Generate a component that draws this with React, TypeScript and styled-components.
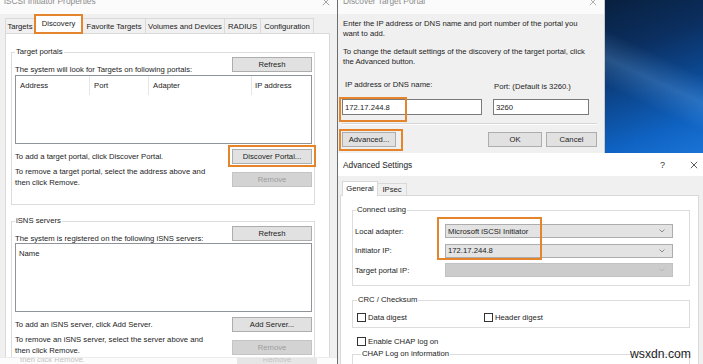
import React from "react";
import styled, { createGlobalStyle, css } from "styled-components";

const FONT = `"Liberation Sans", Arial, "DejaVu Sans", sans-serif`;
const ORANGE = "#e4852b";

const GlobalStyle = createGlobalStyle`
  * { box-sizing: border-box; }
  html, body { margin: 0; padding: 0; background: #ffffff; }
  body { font-family: ${FONT}; font-size: 7.7px; color: #1c1c1c; }
`;

const Screen = styled.div`
  position: relative;
  width: 703px;
  height: 364px;
  overflow: hidden;
  display: flex;
  background: #f0f0f0;
`;

/* ---------- shared window parts ---------- */
const CutTitleBar = styled.div<{ $padLeft: number; $padRight: number }>`
  height: 14px;
  flex: none;
  background: #fbfbfb;
  display: flex;
  justify-content: space-between;
  align-items: flex-start;
  padding: 0 ${(p) => p.$padRight}px 0 ${(p) => p.$padLeft}px;
  overflow: hidden;
`;
const CutTitle = styled.span`
  font-size: 8.4px;
  line-height: 10px;
  color: #8c8c8c;
  margin-top: -4px;
  white-space: nowrap;
`;
const CutClose = styled.span`
  display: flex;
  margin-top: -2px;
`;

const TabStrip = styled.div<{ $h: number; $pad: number }>`
  height: ${(p) => p.$h}px;
  flex: none;
  display: flex;
  align-items: flex-end;
  padding-left: ${(p) => p.$pad}px;
  position: relative;
  z-index: 1;
`;
const Tab = styled.div<{ $w: number; $h: number; $active?: boolean; $marked?: boolean }>`
  width: ${(p) => p.$w}px;
  height: ${(p) => p.$h}px;
  flex: none;
  display: flex;
  align-items: center;
  justify-content: center;
  white-space: nowrap;
  background: #f0f0f0;
  border: 1px solid #d9d9d9;
  border-bottom: none;
  & + & {
    margin-left: -1px;
  }
  ${(p) =>
    p.$active &&
    css`
      background: #ffffff;
      margin-bottom: -1px;
      padding-bottom: 1px;
    `}
  ${(p) =>
    p.$marked &&
    css`
      border: 2px solid ${ORANGE};
      position: relative;
      z-index: 2;
    `}
`;

const PushButton = styled.button<{ $w: number; $disabled?: boolean }>`
  position: relative;
  flex: none;
  width: ${(p) => p.$w}px;
  height: 15px;
  margin: 0;
  padding: 0;
  display: flex;
  align-items: center;
  justify-content: center;
  font: inherit;
  color: #1c1c1c;
  background: #e1e1e1;
  border: 1px solid #adadad;
  white-space: nowrap;
  ${(p) =>
    p.$disabled &&
    css`
      background: #d3d3d3;
      border-color: #c4c4c4;
      color: #9d9d9d;
    `}
`;

const Highlight = styled.span<{ $l: number; $t: number; $w: number; $h: number }>`
  position: absolute;
  left: ${(p) => p.$l}px;
  top: ${(p) => p.$t}px;
  width: ${(p) => p.$w}px;
  height: ${(p) => p.$h}px;
  border: 2px solid ${ORANGE};
  pointer-events: none;
  z-index: 3;
`;

const GroupBox = styled.div<{ $mt?: number; $pb?: number; $pl?: number; $pr?: number; $h?: number }>`
  position: relative;
  flex: none;
  margin-top: ${(p) => p.$mt ?? 0}px;
  border: 1px solid #dcdcdc;
  padding: 0 ${(p) => p.$pr ?? 2}px ${(p) => p.$pb ?? 0}px ${(p) => p.$pl ?? 3}px;
  ${(p) => p.$h !== undefined && css`height: ${p.$h}px;`}
`;
const Legend = styled.div<{ $ml?: number }>`
  width: max-content;
  height: 10px;
  line-height: 10px;
  margin: -6px 0 0 ${(p) => p.$ml ?? 0}px;
  padding: 0 1px;
  background: #ffffff;
  white-space: nowrap;
`;

/* ---------- left window: iSCSI Initiator Properties ---------- */
const PropsWindow = styled.div`
  width: 337px;
  flex: none;
  height: 100%;
  display: flex;
  flex-direction: column;
  background: #f0f0f0;
`;
const PropsPanel = styled.div`
  flex: 1;
  min-height: 0;
  overflow: hidden;
  margin: 0 7px 0 5px;
  background: #ffffff;
  border: 1px solid #d9d9d9;
  border-bottom: none;
  padding: 18px 14px 0 5px;
  display: flex;
  flex-direction: column;
`;
const ActionRow = styled.div<{ $mt?: number; $align?: string }>`
  display: flex;
  justify-content: space-between;
  align-items: ${(p) => p.$align ?? "center"};
  margin-top: ${(p) => p.$mt ?? 0}px;
`;
const Caption = styled.div<{ $mb?: number }>`
  line-height: 11px;
  white-space: nowrap;
  margin-bottom: ${(p) => p.$mb ?? 0}px;
`;
const ButtonSlot = styled.div<{ $mt?: number }>`
  position: relative;
  display: flex;
  margin-top: ${(p) => p.$mt ?? 0}px;
`;
const ListView = styled.div<{ $mt: number }>`
  margin-top: ${(p) => p.$mt}px;
  height: 69px;
  flex: none;
  border: 1px solid #8f949b;
  background: #ffffff;
`;
const ListHeader = styled.div`
  display: flex;
  height: 19px;
`;
const HeaderCell = styled.div<{ $w?: number }>`
  ${(p) => (p.$w ? css`width: ${p.$w}px; flex: none;` : css`flex: 1;`)}
  display: flex;
  align-items: center;
  padding-left: 4px;
  border-right: 1px solid #e6e6e6;
  &:last-child {
    border-right: none;
    padding-left: 3px;
  }
`;
const GhostStrip = styled.div`
  height: 7px;
  flex: none;
  background: #fcfcfc;
  border-top: 1px solid #ececec;
  overflow: hidden;
  display: flex;
  justify-content: space-between;
  align-items: flex-start;
  padding: 0 20px;
`;
const GhostText = styled.span`
  color: #c2c2c2;
  line-height: 3px;
  height: 3px;
  white-space: nowrap;
`;
const GhostButton = styled.span`
  width: 80px;
  height: 6px;
  background: #e6e6e6;
  color: #c4c4c4;
  display: flex;
  justify-content: center;
  line-height: 3px;
  overflow: hidden;
`;

/* ---------- right column ---------- */
const RightColumn = styled.div`
  flex: 1;
  min-width: 0;
  display: flex;
  flex-direction: column;
`;
const TopRow = styled.div`
  height: 153px;
  flex: none;
  display: flex;
`;
const DiscoverWindow = styled.div`
  width: 268px;
  flex: none;
  display: flex;
  flex-direction: column;
  background: #f0f0f0;
  border-left: 1px solid #6d6d6d;
  border-right: 1px solid #c9c9c9;
`;
const DiscoverBody = styled.div`
  flex: 1;
  display: flex;
  flex-direction: column;
  padding: 5px 7px 0 4px;
`;
const Para = styled.p<{ $mt?: number }>`
  margin: ${(p) => p.$mt ?? 0}px 0 0 0;
  padding-left: 1px;
  line-height: 10px;
  white-space: nowrap;
`;
const FieldsRow = styled.div`
  display: flex;
  gap: 11px;
  margin-top: 13px;
`;
const Field = styled.div<{ $w: number }>`
  position: relative;
  width: ${(p) => p.$w}px;
  display: flex;
  flex-direction: column;
`;
const FieldLabel = styled.div<{ $dy?: number; $dx?: number }>`
  height: 19px;
  line-height: 10px;
  padding-top: ${(p) => p.$dy ?? 0}px;
  padding-left: ${(p) => p.$dx ?? 0}px;
  white-space: nowrap;
`;
const TextInput = styled.div`
  position: relative;
  height: 16px;
  display: flex;
  align-items: center;
  padding-left: 2px;
  background: #ffffff;
  border: 1px solid #7a7a7a;
`;
const Separator = styled.div`
  margin-top: 8px;
  height: 2px;
  border-top: 1px solid #d5d5d5;
  border-bottom: 1px solid #ffffff;
`;
const DialogButtons = styled.div`
  display: flex;
  justify-content: space-between;
  margin-top: 7px;
`;
const ButtonGroup = styled.div`
  display: flex;
  gap: 4px;
`;
const Desktop = styled.div`
  flex: 1;
  background:
    linear-gradient(205deg, rgba(140, 200, 255, 0) 38%, rgba(140, 200, 255, 0.22) 52%, rgba(140, 200, 255, 0) 66%),
    linear-gradient(160deg, #08203f 0%, #0b2f60 30%, #0c4a95 58%, #0f62c1 80%, #1a74d6 100%);
`;

/* ---------- Advanced Settings ---------- */
const AdvancedWindow = styled.div`
  flex: 1;
  min-height: 0;
  display: flex;
  flex-direction: column;
  background: #f0f0f0;
  border-left: 1px solid #6d6d6d;
  overflow: hidden;
`;
const AdvTitleBar = styled.div`
  height: 23px;
  flex: none;
  background: #ffffff;
  display: flex;
  align-items: center;
  justify-content: space-between;
  padding: 0 5px 0 5px;
`;
const AdvTitle = styled.span`
  font-size: 8.3px;
  color: #1a1a1a;
`;
const TitleControls = styled.div`
  display: flex;
  align-items: center;
  gap: 25px;
`;
const HelpGlyph = styled.span`
  font-size: 9px;
  color: #333333;
`;
const AdvBody = styled.div`
  flex: 1;
  min-height: 0;
  display: flex;
  flex-direction: column;
  padding-top: 5px;
`;
const AdvPanel = styled.div`
  flex: 1;
  min-height: 0;
  margin: 0 4px 0 2px;
  background: #ffffff;
  border: 1px solid #d9d9d9;
  border-bottom: none;
  padding: 14px 8px 0 11px;
  display: flex;
  flex-direction: column;
`;
const FormGrid = styled.div`
  display: grid;
  grid-template-columns: 90px 228px;
  grid-auto-rows: 14px;
  row-gap: 5.5px;
  margin-top: 9px;
  align-items: center;
`;
const FormLabel = styled.div`
  white-space: nowrap;
`;
const Combo = styled.div<{ $disabled?: boolean }>`
  height: 14px;
  display: flex;
  align-items: center;
  justify-content: space-between;
  padding: 0 7px 0 2px;
  background: #e3e3e3;
  border: 1px solid #adadad;
  white-space: nowrap;
  ${(p) =>
    p.$disabled &&
    css`
      background: #cccccc;
      border-color: #c2c2c2;
    `}
`;
const CheckRow = styled.div<{ $mt: number; $ml: number }>`
  display: grid;
  grid-template-columns: 127px auto;
  margin: ${(p) => p.$mt}px 0 0 ${(p) => p.$ml}px;
  height: 10px;
  align-items: center;
`;
const CheckItem = styled.label`
  display: flex;
  align-items: center;
  gap: 2px;
  white-space: nowrap;
`;
const CheckBox = styled.span`
  width: 9px;
  height: 9px;
  flex: none;
  background: #ffffff;
  border: 1px solid #333333;
`;
const Watermark = styled.div`
  position: absolute;
  right: 12px;
  top: 347px;
  font-family: ${FONT};
  font-size: 12.2px;
  line-height: 14px;
  color: #1e1e1e;
`;

const CloseIcon = ({ size, color }: { size: number; color: string }) => (
  <svg width={size} height={size} viewBox="0 0 10 10">
    <path d="M1 1 L9 9 M9 1 L1 9" stroke={color} strokeWidth="1" fill="none" />
  </svg>
);
const Chevron = ({ muted }: { muted?: boolean }) => (
  <svg width="6" height="4" viewBox="0 0 6 4">
    <path d="M0.5 0.5 L3 3 L5.5 0.5" fill="none" stroke={muted ? "#b3b3b3" : "#808080"} strokeWidth="0.9" />
  </svg>
);

const propTabs = [
  { label: "Targets", w: 30 },
  { label: "Discovery", w: 49, active: true },
  { label: "Favorite Targets", w: 64 },
  { label: "Volumes and Devices", w: 80 },
  { label: "RADIUS", w: 37 },
  { label: "Configuration", w: 54 },
];

export default function App() {
  return (
    <>
      <GlobalStyle />
      <Screen>
        <PropsWindow>
          <CutTitleBar $padLeft={4} $padRight={7}>
            <CutTitle>iSCSI Initiator Properties</CutTitle>
            <CutClose>
              <CloseIcon size={8} color="#8c8c8c" />
            </CutClose>
          </CutTitleBar>
          <TabStrip $h={19} $pad={5}>
            {propTabs.map((t) => (
              <Tab key={t.label} $w={t.w} $h={t.active ? 20 : 15} $active={t.active} $marked={t.active}>
                {t.label}
              </Tab>
            ))}
          </TabStrip>
          <PropsPanel>
            <GroupBox $pb={16}>
              <Legend>Target portals</Legend>
              <ActionRow $align="flex-end">
                <Caption $mb={-3}>The system will look for Targets on following portals:</Caption>
                <PushButton $w={80}>Refresh</PushButton>
              </ActionRow>
              <ListView $mt={3}>
                <ListHeader>
                  <HeaderCell $w={74}>Address</HeaderCell>
                  <HeaderCell $w={59}>Port</HeaderCell>
                  <HeaderCell $w={103}>Adapter</HeaderCell>
                  <HeaderCell>IP address</HeaderCell>
                </ListHeader>
              </ListView>
              <ActionRow $mt={5}>
                <Caption>To add a target portal, click Discover Portal.</Caption>
                <ButtonSlot>
                  <PushButton $w={80}>Discover Portal...</PushButton>
                  <Highlight $l={-4} $t={-4} $w={88} $h={22} />
                </ButtonSlot>
              </ActionRow>
              <ActionRow $mt={2} $align="flex-start">
                <Caption>
                  To remove a target portal, select the address above and
                  <br />
                  then click Remove.
                </Caption>
                <ButtonSlot $mt={6}>
                  <PushButton $w={80} $disabled>
                    Remove
                  </PushButton>
                </ButtonSlot>
              </ActionRow>
            </GroupBox>

            <GroupBox $mt={16} $pb={20}>
              <Legend>iSNS servers</Legend>
              <ActionRow $align="flex-end">
                <Caption $mb={-3}>The system is registered on the following iSNS servers:</Caption>
                <PushButton $w={80}>Refresh</PushButton>
              </ActionRow>
              <ListView $mt={2}>
                <ListHeader>
                  <HeaderCell>Name</HeaderCell>
                </ListHeader>
              </ListView>
              <ActionRow $mt={5}>
                <Caption>To add an iSNS server, click Add Server.</Caption>
                <PushButton $w={80}>Add Server...</PushButton>
              </ActionRow>
              <ActionRow $mt={2} $align="flex-start">
                <Caption>
                  To remove an iSNS server, select the server above and
                  <br />
                  then click Remove.
                </Caption>
                <ButtonSlot $mt={6}>
                  <PushButton $w={80} $disabled>
                    Remove
                  </PushButton>
                </ButtonSlot>
              </ActionRow>
            </GroupBox>
          </PropsPanel>
          <GhostStrip>
            <GhostText>then click Remove.</GhostText>
            <GhostButton>Remove</GhostButton>
          </GhostStrip>
        </PropsWindow>

        <RightColumn>
          <TopRow>
            <DiscoverWindow>
              <CutTitleBar $padLeft={5} $padRight={7}>
                <CutTitle>Discover Target Portal</CutTitle>
                <CutClose>
                  <CloseIcon size={8} color="#9a9a9a" />
                </CutClose>
              </CutTitleBar>
              <DiscoverBody>
                <Para>
                  Enter the IP address or DNS name and port number of the portal you
                  <br />
                  want to add.
                </Para>
                <Para $mt={8}>
                  To change the default settings of the discovery of the target portal, click
                  <br />
                  the Advanced button.
                </Para>
                <FieldsRow>
                  <Field $w={140}>
                    <FieldLabel $dx={3}>IP address or DNS name:</FieldLabel>
                    <TextInput>172.17.244.8</TextInput>
                    <Highlight $l={-3} $t={17} $w={68} $h={25} />
                  </Field>
                  <Field $w={96}>
                    <FieldLabel $dy={2} $dx={1}>
                      Port: (Default is 3260.)
                    </FieldLabel>
                    <TextInput>3260</TextInput>
                  </Field>
                </FieldsRow>
                <Separator />
                <DialogButtons>
                  <ButtonSlot>
                    <PushButton $w={54}>Advanced...</PushButton>
                    <Highlight $l={-3} $t={-3} $w={64} $h={22} />
                  </ButtonSlot>
                  <ButtonGroup>
                    <PushButton $w={54}>OK</PushButton>
                    <PushButton $w={51}>Cancel</PushButton>
                  </ButtonGroup>
                </DialogButtons>
              </DiscoverBody>
            </DiscoverWindow>
            <Desktop />
          </TopRow>

          <AdvancedWindow>
            <AdvTitleBar>
              <AdvTitle>Advanced Settings</AdvTitle>
              <TitleControls>
                <HelpGlyph>?</HelpGlyph>
                <CloseIcon size={8} color="#333333" />
              </TitleControls>
            </AdvTitleBar>
            <AdvBody>
              <TabStrip $h={14} $pad={4}>
                <Tab $w={36} $h={15} $active>
                  General
                </Tab>
                <Tab $w={30} $h={12}>
                  IPsec
                </Tab>
              </TabStrip>
              <AdvPanel>
                <GroupBox $pl={2} $pr={2} $pb={8}>
                  <Legend $ml={1}>Connect using</Legend>
                  <FormGrid>
                    <FormLabel>Local adapter:</FormLabel>
                    <Combo>
                      Microsoft iSCSI Initiator
                      <Chevron />
                    </Combo>
                    <FormLabel>Initiator IP:</FormLabel>
                    <Combo>
                      172.17.244.8
                      <Chevron />
                    </Combo>
                    <FormLabel>Target portal IP:</FormLabel>
                    <Combo $disabled>
                      <span />
                      <Chevron muted />
                    </Combo>
                  </FormGrid>
                  <Highlight $l={84} $t={6} $w={105} $h={43} />
                </GroupBox>

                <GroupBox $mt={14} $pl={2} $pr={2} $pb={5}>
                  <Legend $ml={2}>CRC / Checksum</Legend>
                  <CheckRow $mt={7} $ml={2}>
                    <CheckItem>
                      <CheckBox />
                      Data digest
                    </CheckItem>
                    <CheckItem>
                      <CheckBox />
                      Header digest
                    </CheckItem>
                  </CheckRow>
                </GroupBox>

                <CheckRow $mt={9} $ml={5}>
                  <CheckItem>
                    <CheckBox />
                    Enable CHAP log on
                  </CheckItem>
                </CheckRow>

                <GroupBox $mt={8} $pl={2} $pr={2} $h={30}>
                  <Legend $ml={6}>CHAP Log on information</Legend>
                </GroupBox>
              </AdvPanel>
            </AdvBody>
          </AdvancedWindow>
        </RightColumn>
        <Watermark>wsxdn.com</Watermark>
      </Screen>
    </>
  );
}
